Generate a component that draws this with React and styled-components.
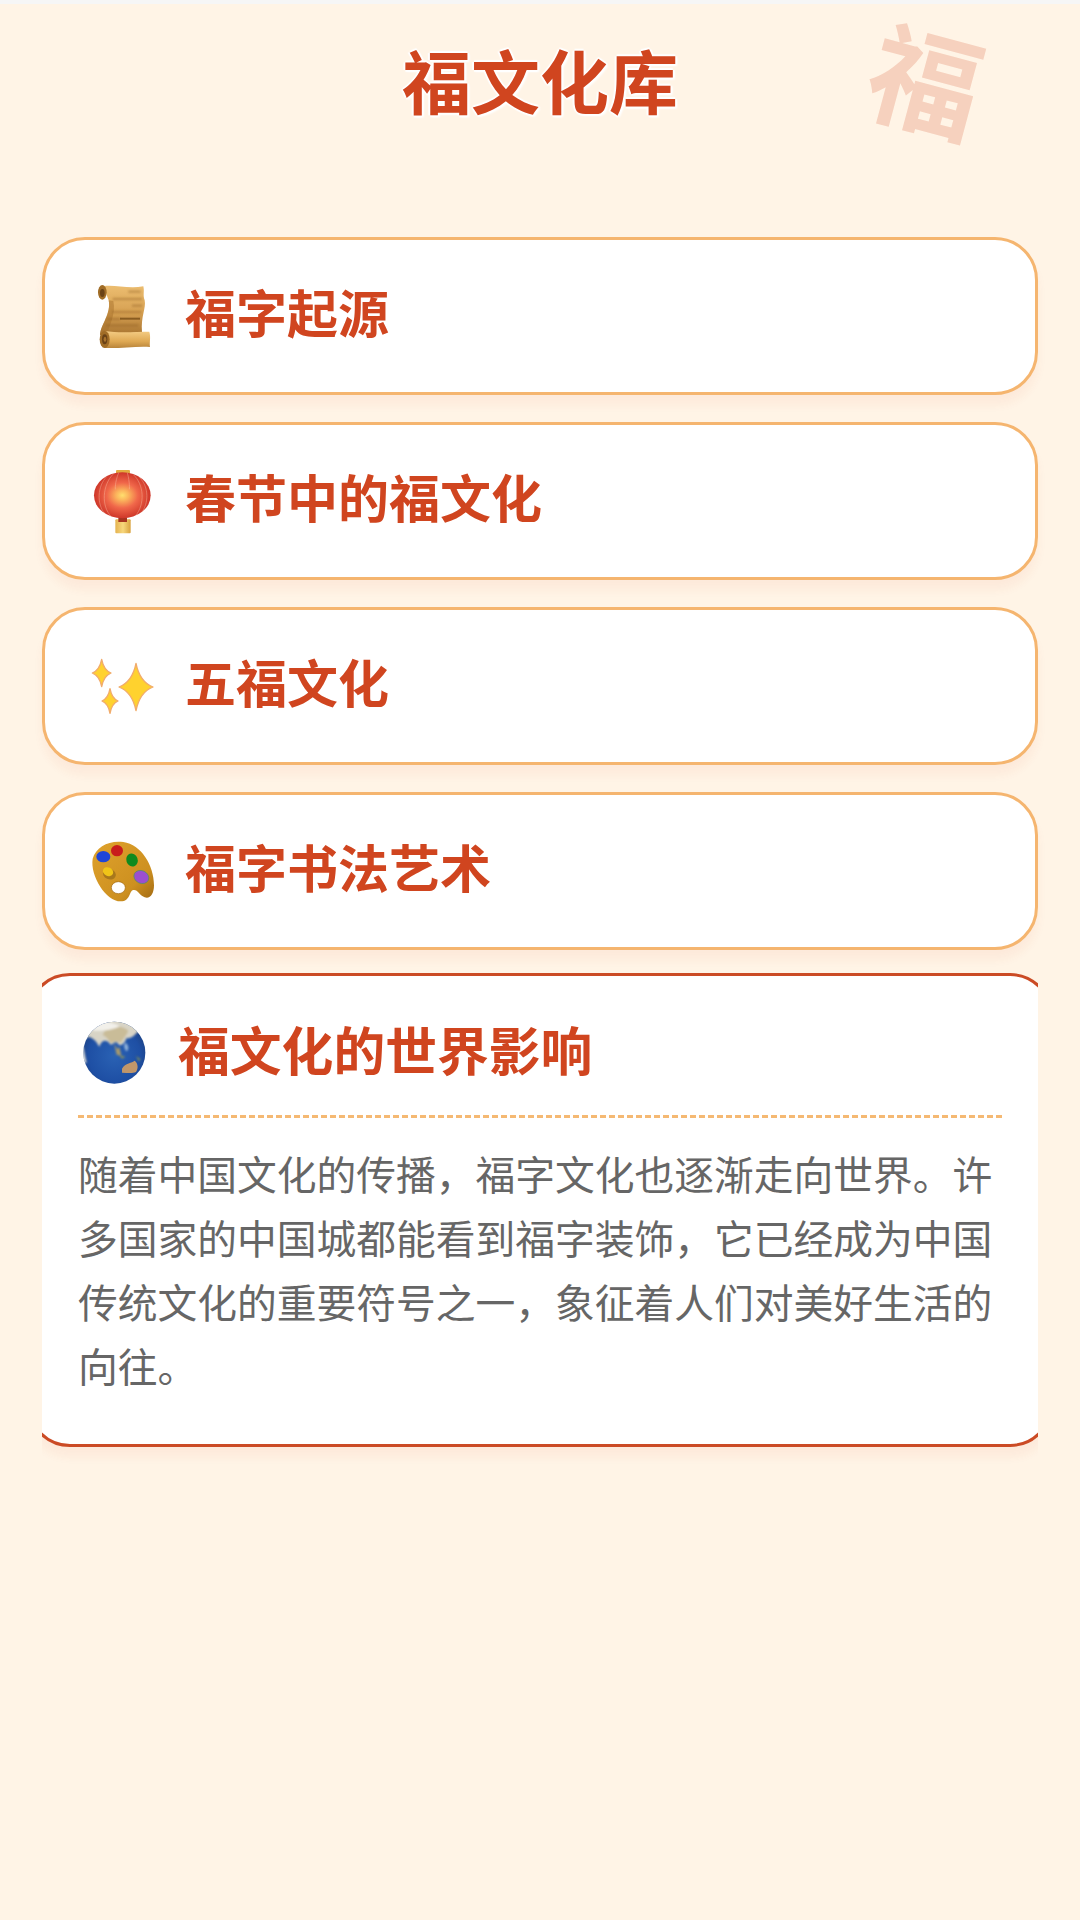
import React from "react";
import styled, { createGlobalStyle } from "styled-components";

const GlobalStyle = createGlobalStyle`
  html, body {
    margin: 0;
    padding: 0;
    background: #fff4e6;
    font-family: "Noto Sans CJK SC", "Noto Sans", sans-serif;
  }
`;

function IconFrame({ children }) {
  return (
    <IconSvg viewBox="54 27 216 216" aria-hidden="true">
      {children}
    </IconSvg>
  );
}

function ScrollIcon() {
  return (
    <IconFrame>
      <defs>
        <linearGradient id="sheet" x1="0" y1="0" x2="0" y2="1">
          <stop offset="0" stopColor="#ecbd70" />
          <stop offset="0.55" stopColor="#d6a052" />
          <stop offset="1" stopColor="#a87430" />
        </linearGradient>
        <linearGradient id="roll" x1="0" y1="0" x2="0" y2="1">
          <stop offset="0" stopColor="#f4cc84" />
          <stop offset="0.6" stopColor="#dfa954" />
          <stop offset="1" stopColor="#b8843a" />
        </linearGradient>
        <filter id="soft">
          <feGaussianBlur stdDeviation="2.5" />
        </filter>
      </defs>
      <path d="M100 46C130 40 175 54 220 46C224 62 218 72 224 88C229 112 212 135 216 184L90 192C92 160 124 130 116 88Z" fill="url(#sheet)" />
      <path d="M116 88C124 130 92 160 90 192L112 190C118 160 138 130 130 90Z" fill="#a8722c" opacity="0.5" />
      <g stroke="#8a5a1e" strokeWidth="7" opacity="0.4" filter="url(#soft)">
        <path d="M175 62H212" />
        <path d="M128 84H216" />
        <path d="M186 104H216" />
        <path d="M126 123H214" />
        <path d="M112 144H150" />
        <path d="M108 163H205" />
      </g>
      <path d="M150 143H210" stroke="#6e4410" strokeWidth="6" opacity="0.7" />
      <ellipse cx="97" cy="64" rx="13" ry="22" fill="#a06c26" />
      <ellipse cx="97" cy="66" rx="7" ry="12" fill="#6a4216" />
      <path d="M103 180C150 187 200 182 238 182C243 198 238 214 240 228C200 225 150 233 104 231Z" fill="url(#roll)" />
      <ellipse cx="104" cy="205" rx="15" ry="26" fill="#a06c26" />
      <ellipse cx="104" cy="205" rx="8" ry="15" fill="#6a4216" />
      <ellipse cx="105" cy="205" rx="4" ry="8" fill="#a8722c" />
    </IconFrame>
  );
}

function LanternIcon() {
  return (
    <IconFrame>
      <defs>
        <radialGradient id="glow" cx="0.5" cy="0.5" r="0.55">
          <stop offset="0" stopColor="#ffdf6e" />
          <stop offset="0.2" stopColor="#fbb45c" />
          <stop offset="0.5" stopColor="#f0674a" />
          <stop offset="1" stopColor="#c72c22" />
        </radialGradient>
        <linearGradient id="tassel" x1="0" y1="0" x2="1" y2="0">
          <stop offset="0" stopColor="#e5b350" />
          <stop offset="0.5" stopColor="#f7d77c" />
          <stop offset="1" stopColor="#d9a23e" />
        </linearGradient>
      </defs>
      <rect x="138" y="42" width="42" height="12" rx="3" fill="#e2ac40" />
      <rect x="136" y="190" width="46" height="42" rx="3" fill="url(#tassel)" />
      <rect x="145" y="184" width="26" height="14" fill="#a8341f" />
      <ellipse cx="157" cy="118" rx="85" ry="69" fill="url(#glow)" />
      <g fill="none" stroke="#ffd9c0" strokeWidth="2" opacity="0.5">
        <path d="M130 54C98 85 92 150 124 182" />
        <path d="M146 50C134 80 136 100 136 100" />
        <path d="M172 50C180 80 178 100 178 100" />
        <path d="M190 56C222 85 226 145 196 180" />
        <path d="M110 62C82 90 80 145 104 172" />
        <path d="M208 64C238 92 236 145 214 170" />
      </g>
    </IconFrame>
  );
}

const star = (cx, cy, rx, ry) => {
  const kx = rx * 0.22;
  const ky = ry * 0.22;
  return `M${cx} ${cy - ry}Q${cx + kx} ${cy - ky} ${cx + rx} ${cy}Q${cx + kx} ${cy + ky} ${cx} ${cy + ry}Q${cx - kx} ${cy + ky} ${cx - rx} ${cy}Q${cx - kx} ${cy - ky} ${cx} ${cy - ry}Z`;
};

function SparklesIcon() {
  return (
    <IconFrame>
      <g fill="#ffd22e" stroke="#f1ab6c" strokeWidth="4" strokeLinejoin="round">
        <path d={star(198, 138, 51, 71)} />
        <path d={star(95, 96, 28, 41)} />
        <path d={star(120, 180, 24, 37)} />
      </g>
    </IconFrame>
  );
}

function PaletteIcon() {
  return (
    <IconFrame>
      <defs>
        <linearGradient id="wood" x1="0" y1="0" x2="1" y2="1">
          <stop offset="0" stopColor="#dfa22c" />
          <stop offset="0.7" stopColor="#cd9020" />
          <stop offset="1" stopColor="#a06812" />
        </linearGradient>
      </defs>
      <path d="M68 98C78 62 118 42 160 48C214 56 252 118 252 178C252 204 240 220 224 214C206 206 204 190 190 192C176 196 182 226 152 226C108 226 60 150 68 98Z" fill="url(#wood)" />
      <ellipse cx="145" cy="185" rx="21" ry="18" fill="#fff" stroke="#a06812" strokeWidth="2" />
      <ellipse cx="100" cy="92" rx="21" ry="17" fill="#1f45d8" />
      <ellipse cx="141" cy="74" rx="18" ry="17" fill="#c81c1c" />
      <ellipse cx="186" cy="102" rx="17" ry="20" fill="#0f8a1e" transform="rotate(-20 186 102)" />
      <ellipse cx="118" cy="144" rx="20" ry="16" fill="#a8781c" transform="rotate(25 118 144)" />
      <ellipse cx="114" cy="137" rx="16" ry="13" fill="#f0c418" transform="rotate(25 114 137)" />
      <ellipse cx="214" cy="153" rx="23" ry="19" fill="#9b4fd0" stroke="#4f8f6a" strokeWidth="2" transform="rotate(25 214 153)" />
    </IconFrame>
  );
}

function GlobeIcon() {
  return (
    <IconFrame>
      <defs>
        <radialGradient id="sea" cx="0.5" cy="0.55" r="0.6">
          <stop offset="0" stopColor="#2a62b4" />
          <stop offset="0.7" stopColor="#1e4fa4" />
          <stop offset="1" stopColor="#1c3f7c" />
        </radialGradient>
        <clipPath id="earth">
          <circle cx="163" cy="140" r="93" />
        </clipPath>
        <filter id="haze">
          <feGaussianBlur stdDeviation="3" />
        </filter>
      </defs>
      <circle cx="163" cy="140" r="93" fill="url(#sea)" />
      <g clipPath="url(#earth)">
        <g filter="url(#haze)">
          <path d="M60 40H240V70C225 88 212 100 200 96C190 120 178 122 172 110C160 104 156 122 150 114C140 100 125 100 118 122C108 104 100 96 84 92L60 110Z" fill="#d8d4c6" />
          <path d="M150 64C175 58 195 64 205 74C198 92 190 96 182 112C172 104 160 108 152 112C142 96 136 90 128 88C130 78 138 70 150 64Z" fill="#c9bc98" />
          <path d="M95 50C120 44 150 46 180 60C160 72 125 76 100 74Z" fill="#f2f0ea" />
          <path d="M62 100C74 130 74 150 80 170L56 170Z" fill="#e6e4dc" />
          <path d="M162 112L172 130L178 122L184 150L170 146Z" fill="#a89a6c" />
          <path d="M196 110C206 116 208 130 200 136C192 128 190 118 196 110Z" fill="#8fb0d8" />
          <path d="M228 150L242 160L236 166Z" fill="#7a8a55" />
          <path d="M178 148L196 152L186 158Z" fill="#8c9256" />
        </g>
        <path d="M186 188C196 170 216 172 224 164C234 172 236 186 228 198C216 204 200 200 186 200Z" fill="#c0966a" />
      </g>
    </IconFrame>
  );
}

const topics = [
  { title: "福字起源", Icon: ScrollIcon },
  { title: "春节中的福文化", Icon: LanternIcon },
  { title: "五福文化", Icon: SparklesIcon },
  { title: "福字书法艺术", Icon: PaletteIcon },
];

function App() {
  return (
    <>
      <GlobalStyle />
      <Page>
        <StatusStrip />
        <Header>
          <Title>福文化库</Title>
          <Watermark>福</Watermark>
        </Header>
        <List>
          {topics.map(({ title, Icon }) => (
            <TopicCard key={title}>
              <IconSlot>
                <Icon />
              </IconSlot>
              <TopicTitle>{title}</TopicTitle>
            </TopicCard>
          ))}
          <DetailClip>
            <DetailCard>
              <DetailHeader>
                <IconSlot>
                  <GlobeIcon />
                </IconSlot>
                <DetailTitle>福文化的世界影响</DetailTitle>
              </DetailHeader>
              <DetailText>
                随着中国文化的传播，福字文化也逐渐走向世界。许多国家的中国城都能看到福字装饰，它已经成为中国传统文化的重要符号之一，象征着人们对美好生活的向往。
              </DetailText>
            </DetailCard>
          </DetailClip>
        </List>
      </Page>
    </>
  );
}

const Page = styled.div`
  width: 1080px;
  height: 1920px;
  background: #fff4e6;
  overflow: hidden;
`;

const StatusStrip = styled.div`
  height: 4px;
  background: #f6f6f6;
`;

const Header = styled.header`
  position: relative;
  height: 233px;
  box-sizing: border-box;
  padding-top: 20px;
  text-align: center;
`;

const Title = styled.h1`
  margin: 0;
  font-size: 69px;
  line-height: 110px;
  font-weight: 700;
  color: #d0451f;
  text-shadow: -2px 0 1px #fff, 2px 0 1px #fff, 0 -2px 1px #fff, 0 2px 1px #fff, 2px 2px 2px #fff;
`;

const Watermark = styled.div`
  position: absolute;
  top: 16px;
  left: 871px;
  font-size: 112px;
  line-height: 112px;
  font-weight: 700;
  color: rgba(212, 69, 31, 0.2);
  transform: rotate(15deg);
`;

const List = styled.main`
  display: flex;
  flex-direction: column;
  gap: 27px;
  padding: 0 42px;
`;

const TopicCard = styled.section`
  display: flex;
  align-items: center;
  height: 158px;
  box-sizing: border-box;
  padding-left: 43px;
  background: #fff;
  border: 3px solid #f5b56f;
  border-radius: 43px;
  box-shadow: 0 10px 10px rgba(212, 69, 31, 0.055);
`;

const IconSlot = styled.div`
  flex: none;
  width: 72px;
  height: 72px;
`;

const IconSvg = styled.svg`
  display: block;
  width: 72px;
  height: 72px;
`;

const TopicTitle = styled.h2`
  margin: 0 0 0 25px;
  padding-bottom: 10px;
  font-size: 51px;
  line-height: 72px;
  font-weight: 700;
  color: #d0451f;
`;

const DetailClip = styled.div`
  margin-top: -4px;
  overflow-x: clip;
`;

const DetailCard = styled.article`
  margin: 0 -15px;
  box-sizing: border-box;
  height: 474px;
  padding: 39px 48px 0 48px;
  background: #fff;
  border: 3px solid #cb4b25;
  border-radius: 43px;
  box-shadow: 0 10px 10px rgba(212, 69, 31, 0.055);
`;

const DetailHeader = styled.div`
  display: flex;
  align-items: center;
  padding-bottom: 28px;
  margin-bottom: 23px;
  border-bottom: 3px dashed #f5b973;
`;

const DetailTitle = styled.h2`
  margin: 0 0 0 28px;
  padding-bottom: 5px;
  font-size: 51.8px;
  line-height: 67px;
  font-weight: 700;
  color: #d0451f;
`;

const DetailText = styled.p`
  margin: 0;
  font-size: 39.75px;
  line-height: 64px;
  color: #666;
`;

export default App;
